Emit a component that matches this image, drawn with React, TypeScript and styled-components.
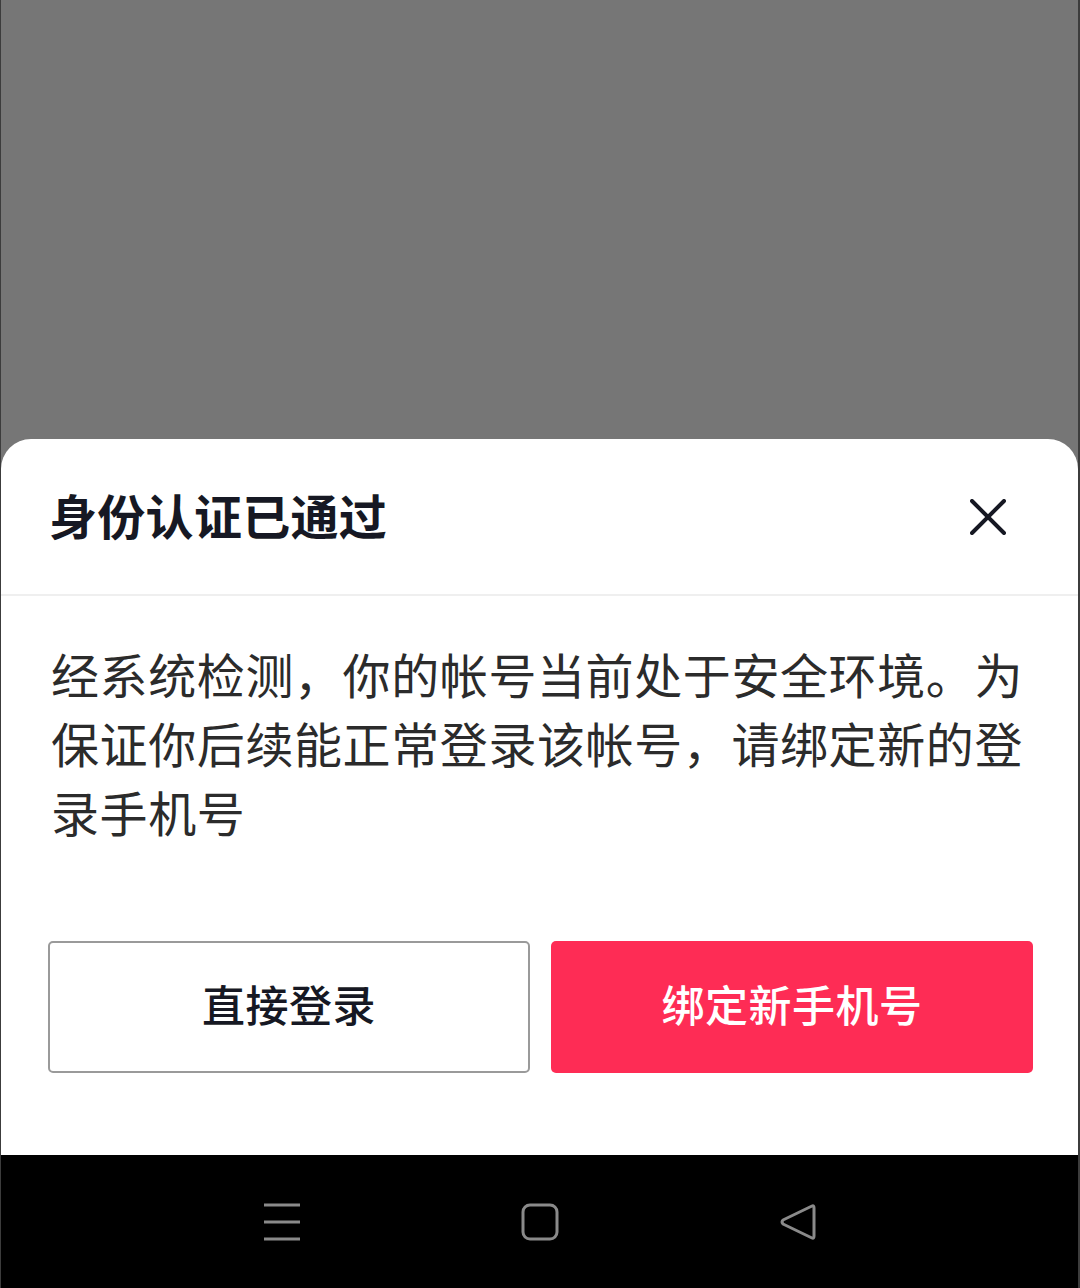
import React from "react";
import styled, { createGlobalStyle } from "styled-components";

const GlobalStyle = createGlobalStyle`
  html, body { margin: 0; padding: 0; background: #000; }
  body { font-family: "Noto Sans CJK SC", "Noto Sans", sans-serif; }
  * { box-sizing: border-box; }
`;

const Screen = styled.div`
  width: 1080px;
  height: 1288px;
  display: flex;
  flex-direction: column;
  background: #767676;
  border-left: 1px solid #3c3c3c;
  border-right: 2px solid #3c3c3c;
  overflow: hidden;
`;

const Backdrop = styled.div`
  flex: 1;
  background: #767676;
`;

const Sheet = styled.section`
  background: #fff;
  border-radius: 30px 30px 0 0;
  display: flex;
  flex-direction: column;
`;

const Header = styled.header`
  height: 157px;
  display: flex;
  align-items: center;
  justify-content: space-between;
  padding: 0 72px 0 48px;
  border-bottom: 2px solid #efefef;
`;

const Title = styled.h1`
  margin: 0;
  font-size: 48px;
  font-weight: 700;
  color: #161823;
  letter-spacing: 0.3px;
  line-height: 1;
  padding-bottom: 6px;
`;

const CloseButton = styled.button`
  border: none;
  background: none;
  padding: 0;
  width: 36px;
  height: 36px;
  display: flex;
  align-items: center;
  justify-content: center;
  cursor: pointer;
`;

const Body = styled.div`
  padding: 43px 40px 0 50px;
`;

const Message = styled.p`
  margin: 0;
  font-size: 48px;
  line-height: 69px;
  letter-spacing: 0.6px;
  color: #2b2b2b;
  font-weight: 400;
  width: 985px;
`;

const Actions = styled.div`
  display: grid;
  grid-template-columns: 1fr 1fr;
  gap: 21px;
  padding: 95px 45px 82px 47px;
`;

const ActionButton = styled.button<{ $primary?: boolean }>`
  height: 132px;
  border-radius: 5px;
  font-family: "Noto Sans CJK SC", "Noto Sans", sans-serif;
  font-size: 43px;
  font-weight: 500;
  letter-spacing: 0.5px;
  display: flex;
  align-items: center;
  justify-content: center;
  padding: 0 0 8px;
  cursor: pointer;
  border: ${(p) => (p.$primary ? "none" : "2px solid #9a9a9a")};
  background: ${(p) => (p.$primary ? "#FE2C55" : "#fff")};
  color: ${(p) => (p.$primary ? "#fff" : "#161823")};
`;

const NavBar = styled.nav`
  height: 133px;
  background: #000;
  display: flex;
  align-items: center;
  justify-content: center;
`;

const NavSlot = styled.div`
  width: 258px;
  display: flex;
  justify-content: center;
  align-items: center;
`;

export default function App() {
  return (
    <>
      <GlobalStyle />
      <Screen>
        <Backdrop />
        <Sheet>
          <Header>
            <Title>身份认证已通过</Title>
            <CloseButton aria-label="关闭">
              <svg width="36" height="36" viewBox="0 0 36 36">
                <path
                  d="M2 2 L34 34 M34 2 L2 34"
                  stroke="#161823"
                  strokeWidth="4"
                  strokeLinecap="round"
                />
              </svg>
            </CloseButton>
          </Header>
          <Body>
            <Message>
              经系统检测，你的帐号当前处于安全环境。为保证你后续能正常登录该帐号，请绑定新的登录手机号
            </Message>
          </Body>
          <Actions>
            <ActionButton>直接登录</ActionButton>
            <ActionButton $primary>绑定新手机号</ActionButton>
          </Actions>
        </Sheet>
        <NavBar>
          <NavSlot>
            <svg width="38" height="38" viewBox="0 0 38 38">
              <path
                d="M1 2 H37 M1 19 H37 M1 36 H37"
                stroke="#8a8a8a"
                strokeWidth="3"
              />
            </svg>
          </NavSlot>
          <NavSlot>
            <svg width="38" height="38" viewBox="0 0 38 38">
              <rect
                x="2"
                y="2"
                width="34"
                height="34"
                rx="7"
                fill="none"
                stroke="#8a8a8a"
                strokeWidth="3"
              />
            </svg>
          </NavSlot>
          <NavSlot>
            <svg width="38" height="38" viewBox="0 0 38 38">
              <path
                d="M33 3 Q35 2 35 5 V33 Q35 36 33 35 L4 21 Q2 19 4 17 Z"
                fill="none"
                stroke="#8a8a8a"
                strokeWidth="3"
                strokeLinejoin="round"
              />
            </svg>
          </NavSlot>
        </NavBar>
      </Screen>
    </>
  );
}
